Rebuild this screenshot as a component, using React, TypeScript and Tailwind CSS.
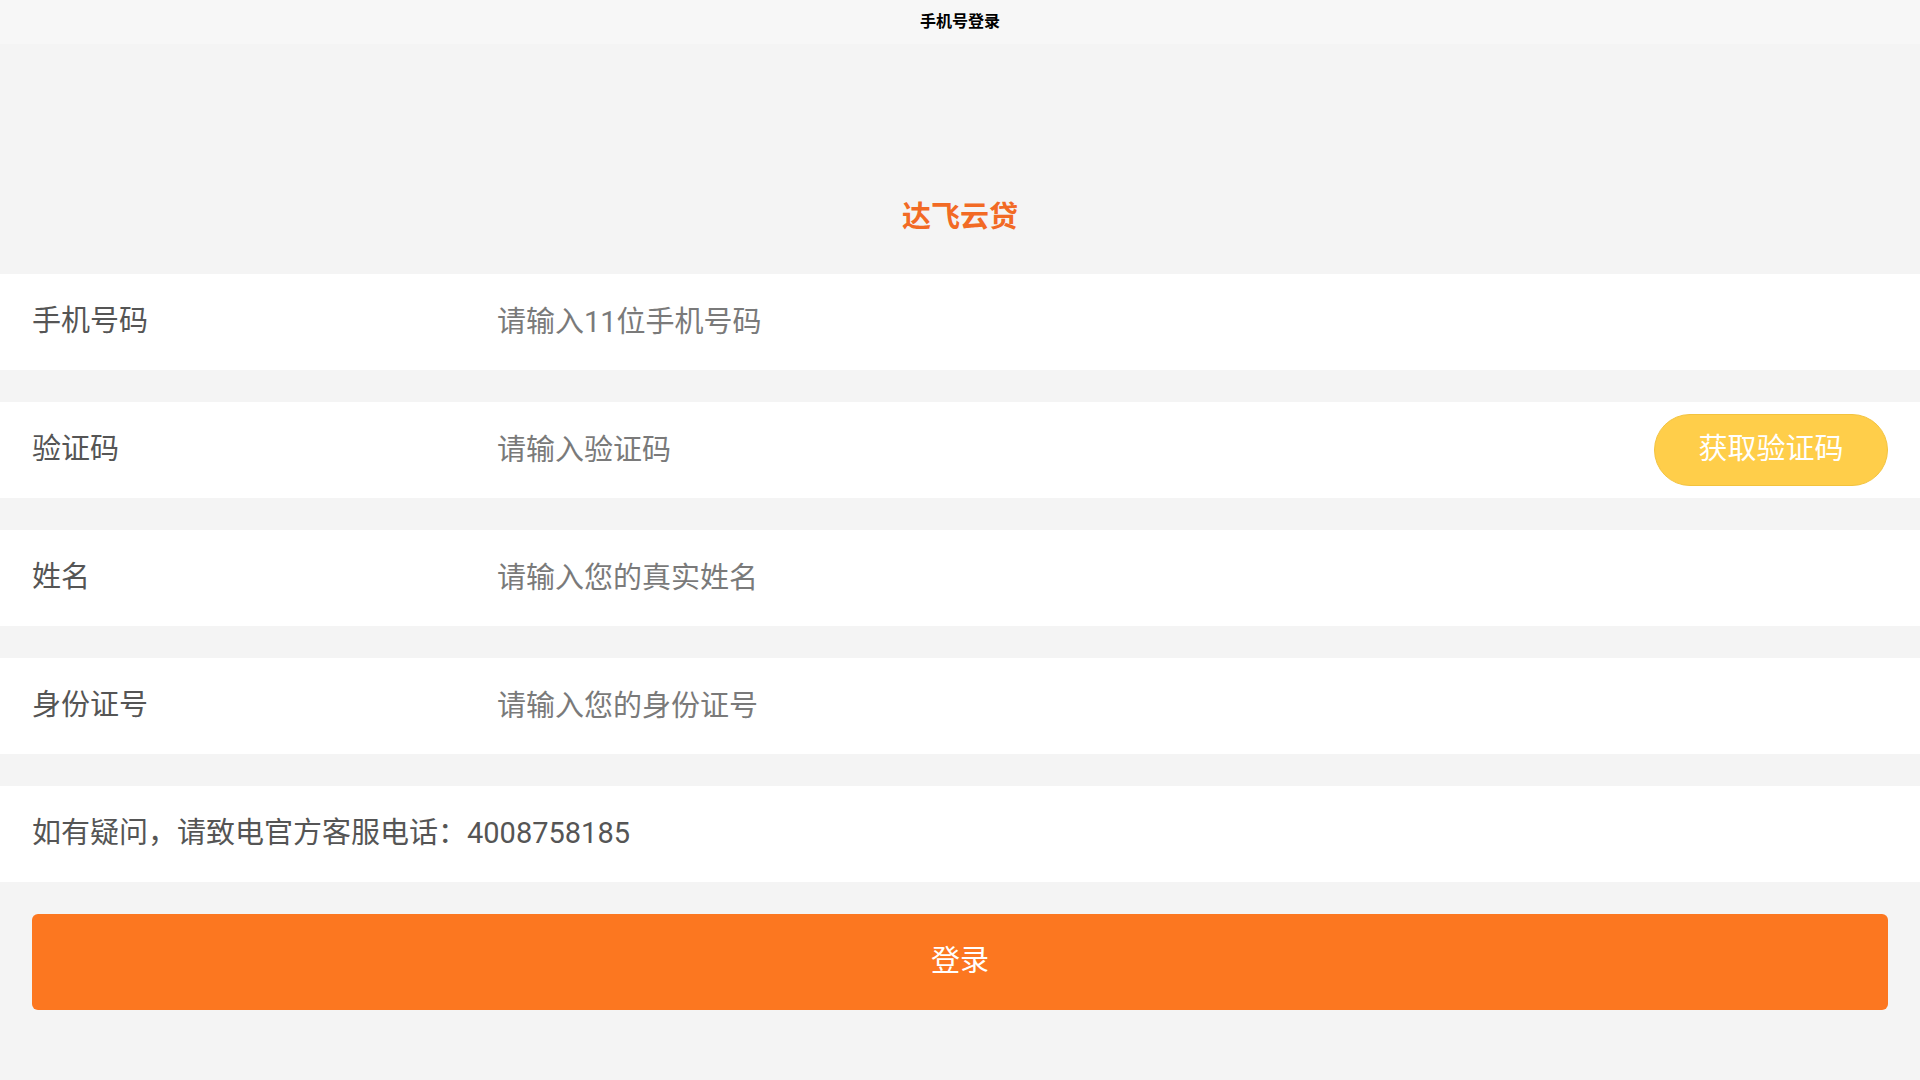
import { useState } from "react";

const fields = [
  { label: "手机号码", placeholder: "请输入11位手机号码", type: "tel" },
  { label: "验证码", placeholder: "请输入验证码", type: "text", code: true },
  { label: "姓名", placeholder: "请输入您的真实姓名", type: "text" },
  { label: "身份证号", placeholder: "请输入您的身份证号", type: "text" },
];

const App = () => {
  const [values, setValues] = useState<Record<string, string>>({});

  return (
    <div className="min-h-screen bg-[#f4f4f4] font-[Roboto,'Noto_Sans_CJK_SC',sans-serif]">
      {/* Header */}
      <div className="h-[44px] bg-[#f7f7f7] flex items-center justify-center">
        <span className="text-[16px] font-bold text-black">手机号登录</span>
      </div>

      {/* Brand */}
      <div className="h-[230px] flex items-end justify-center pb-[36px]">
        <h1 className="text-[29px] leading-[42px] font-bold text-[#f26a24]">达飞云贷</h1>
      </div>

      {/* Form */}
      <div className="flex flex-col gap-8">
        {fields.map((f) => (
          <div key={f.label} className="h-24 bg-white flex items-center pl-8 pr-8">
            <label className="w-[465px] shrink-0 text-[29px] text-[#555]">{f.label}</label>
            <input
              type={f.type}
              placeholder={f.placeholder}
              value={values[f.label] ?? ""}
              onChange={(e) => setValues({ ...values, [f.label]: e.target.value })}
              className="flex-1 min-w-0 h-full bg-transparent outline-none text-[29px] text-[#333] placeholder:text-[#7a7a7a]"
            />
            {f.code && (
              <button className="w-[234px] h-[72px] shrink-0 rounded-full bg-[#ffce4a] border border-[#f3c33e] text-white text-[29px]">
                获取验证码
              </button>
            )}
          </div>
        ))}

        <div className="h-24 bg-white flex items-center pl-8">
          <p className="text-[29px] text-[#555]">如有疑问，请致电官方客服电话：4008758185</p>
        </div>

        <div className="px-8">
          <button className="w-full h-24 rounded-[6px] bg-[#fc7720] text-white text-[29px]">登录</button>
        </div>
      </div>
    </div>
  );
};

export default App;
